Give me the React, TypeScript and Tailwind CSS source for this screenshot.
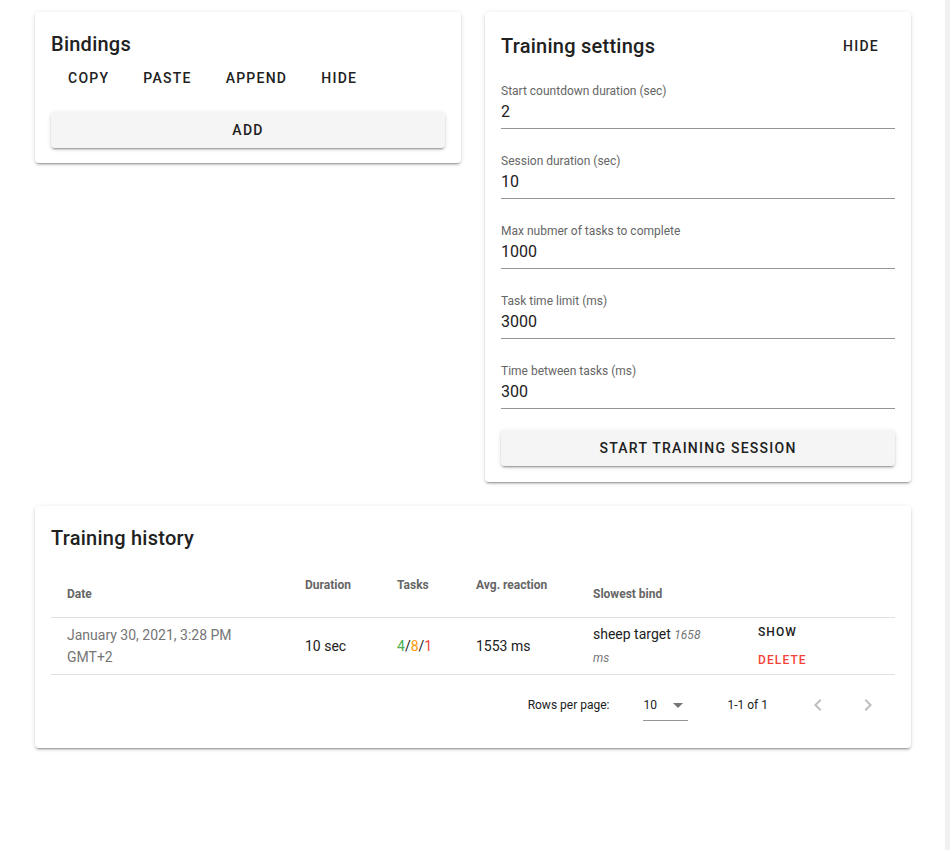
import React from 'react';

const cardCls =
  'bg-white rounded-[4px] shadow-[0_3px_1px_-2px_rgba(0,0,0,0.2),0_2px_2px_0_rgba(0,0,0,0.14),0_1px_5px_0_rgba(0,0,0,0.12)]';

const raisedBtn =
  'h-9 w-full rounded-[4px] bg-[#f5f5f5] text-[14px] font-medium tracking-[1.25px] uppercase text-[#212121] shadow-[0_3px_1px_-2px_rgba(0,0,0,0.2),0_2px_2px_0_rgba(0,0,0,0.14),0_1px_5px_0_rgba(0,0,0,0.12)]';

const textBtn = 'h-9 min-w-16 px-4 text-[14px] font-medium tracking-[1.25px] uppercase text-[#212121]';

const fields = [
  { label: 'Start countdown duration (sec)', value: '2' },
  { label: 'Session duration (sec)', value: '10' },
  { label: 'Max nubmer of tasks to complete', value: '1000' },
  { label: 'Task time limit (ms)', value: '3000' },
  { label: 'Time between tasks (ms)', value: '300' },
];

const Field: React.FC<{ label: string; value: string }> = ({ label, value }) => (
  <div className="flex flex-col">
    <div className="h-4 text-[12px] leading-4 text-[#666666]">{label}</div>
    <div className="mt-px h-6 text-[16px] leading-6 text-[#212121]">{value}</div>
    <div className="mt-1 h-px bg-[#949494]" />
  </div>
);

export default function App() {
  return (
    <div className="flex min-h-[850px] w-full bg-white font-['Roboto',sans-serif]">
      <div className="flex-1 pl-[35px] pt-3">
        {/* Top row */}
        <div className="flex items-start gap-6">
          {/* Bindings */}
          <div className={`${cardCls} w-[426px] px-4 pt-4 pb-[15px]`}>
            <h2 className="h-8 text-[20px] font-medium leading-8 tracking-[0.25px] text-[#212121]">Bindings</h2>
            <div className="flex gap-0.5 pl-px">
              <button className={textBtn}>Copy</button>
              <button className={textBtn}>Paste</button>
              <button className={textBtn}>Append</button>
              <button className={textBtn}>Hide</button>
            </div>
            <div className="mt-4">
              <button className={raisedBtn}>Add</button>
            </div>
          </div>

          {/* Training settings */}
          <div className={`${cardCls} w-[426px] px-4 pt-4 pb-4`}>
            <div className="flex h-9 items-center justify-between">
              <h2 className="text-[20px] font-medium leading-8 tracking-[0.25px] text-[#212121]">Training settings</h2>
              <button className={textBtn}>Hide</button>
            </div>
            <div className="mt-[19px] flex flex-col gap-6">
              {fields.map((f) => (
                <Field key={f.label} label={f.label} value={f.value} />
              ))}
            </div>
            <div className="mt-[21px]">
              <button className={raisedBtn}>Start training session</button>
            </div>
          </div>
        </div>

        {/* Training history */}
        <div className={`${cardCls} mt-6 w-[876px] px-4 pt-4 pb-[15px]`}>
          <h2 className="h-8 text-[20px] font-medium leading-8 tracking-[0.25px] text-[#212121]">Training history</h2>

          {/* header */}
          <div className="flex h-[64px] border-b border-[#e0e0e0] text-[12px] font-bold leading-4 text-[#666666]">
            <div className="w-[238px] pl-4 pt-[32px]">Date</div>
            <div className="w-[92px] pl-4 pt-[23px]">Duration</div>
            <div className="w-[79px] pl-4 pt-[23px]">Tasks</div>
            <div className="w-[117px] pl-4 pt-[23px]">Avg. reaction</div>
            <div className="w-[165px] pl-4 pt-[32px]">Slowest bind</div>
            <div className="flex-1" />
          </div>

          {/* row */}
          <div className="flex h-[57px] items-center border-b border-[#e0e0e0] text-[14px] text-[#212121]">
            <div className="w-[238px] px-4 leading-[22px] text-[#757575]">January 30, 2021, 3:28 PM GMT+2</div>
            <div className="w-[92px] px-4">10 sec</div>
            <div className="w-[79px] px-4">
              <span className="text-[#4caf50]">4</span>/<span className="text-[#ff9800]">8</span>/
              <span className="text-[#f44336]">1</span>
            </div>
            <div className="w-[117px] px-4">1553 ms</div>
            <div className="w-[165px] pl-4 pr-8 leading-[22px]">
              sheep target <span className="text-[12px] italic leading-[22px] text-[#757575]">1658 ms</span>
            </div>
            <div className="flex flex-1 flex-col items-start pl-4">
              <button className="h-7 text-[12px] font-medium tracking-[1.1px] text-[#212121]">SHOW</button>
              <button className="h-7 text-[12px] font-medium tracking-[1.1px] text-[#f44336]">DELETE</button>
            </div>
          </div>

          {/* footer */}
          <div className="flex h-[58px] items-center justify-end pt-px text-[12px] text-[#212121]">
            <span>Rows per page:</span>
            <div className="ml-[34px] flex h-[32px] w-[45px] items-center justify-between border-b border-[#949494] pt-px">
              <span>10</span>
              <svg width="24" height="24" viewBox="0 0 24 24" className="-mr-[2px]">
                <path d="M7 10l5 5 5-5z" fill="rgba(0,0,0,0.54)" />
              </svg>
            </div>
            <span className="ml-[39px]">1-1 of 1</span>
            <div className="ml-8 mr-[9px] flex items-center gap-[14px]">
              <button className="flex h-9 w-9 items-center justify-center">
                <svg width="24" height="24" viewBox="0 0 24 24">
                  <path d="M15.41 7.41L14 6l-6 6 6 6 1.41-1.41L10.83 12z" fill="rgba(0,0,0,0.26)" />
                </svg>
              </button>
              <button className="flex h-9 w-9 items-center justify-center">
                <svg width="24" height="24" viewBox="0 0 24 24">
                  <path d="M10 6L8.59 7.41 13.17 12l-4.58 4.59L10 18l6-6z" fill="rgba(0,0,0,0.26)" />
                </svg>
              </button>
            </div>
          </div>
        </div>
      </div>
      <div className="w-[5px] bg-[#f1f1f1]" />
    </div>
  );
}
